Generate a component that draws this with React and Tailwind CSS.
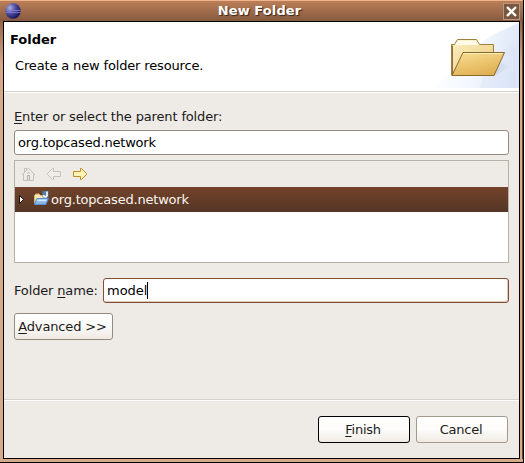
import React from "react";

function EclipseIcon() {
  return (
    <svg width="16" height="16" viewBox="0 0 16 16">
      <defs>
        <radialGradient id="globe" cx="0.3" cy="0.3" r="0.75">
          <stop offset="0" stopColor="#b0b0e2" />
          <stop offset="0.45" stopColor="#5553a8" />
          <stop offset="1" stopColor="#17125a" />
        </radialGradient>
      </defs>
      <circle cx="8" cy="8" r="7.7" fill="url(#globe)" />
      <path d="M1 7.5h14.5M0.5 9.5h15" stroke="#8385cc" strokeWidth="0.8" />
    </svg>
  );
}

function FolderBanner() {
  return (
    <svg width="85" height="66" viewBox="0 0 85 66" className="block">
      <defs>
        <linearGradient id="sky" x1="0" y1="0.3" x2="1" y2="0.5">
          <stop offset="0" stopColor="#ffffff" />
          <stop offset="0.5" stopColor="#f4f8fe" />
          <stop offset="1" stopColor="#dde6f7" />
        </linearGradient>
        <linearGradient id="back" x1="0" y1="0" x2="1" y2="1">
          <stop offset="0" stopColor="#fbf0c4" />
          <stop offset="1" stopColor="#ebc97a" />
        </linearGradient>
        <linearGradient id="front" x1="0" y1="0" x2="0.5" y2="1">
          <stop offset="0" stopColor="#f9e19a" />
          <stop offset="0.5" stopColor="#edc873" />
          <stop offset="1" stopColor="#e1b155" />
        </linearGradient>
        <linearGradient id="shade" x1="0" y1="0" x2="1" y2="0">
          <stop offset="0" stopColor="#9fadc8" />
          <stop offset="1" stopColor="#dbe4f4" />
        </linearGradient>
      </defs>
      <path d="M85 1C66 9 45 18 33 35C22 46 10 53 0 66H85Z" fill="url(#sky)" />
      <path d="M85 21C68 27 54 36 46 66H85Z" fill="#d6e1f5" opacity="0.3" />
      <path d="M17 53.5L61 54L76 44L68 41Z" fill="url(#shade)" opacity="0.8" />
      <path d="M17.5 53V22.5H20.5L23.5 17.5H42.5L45.5 22.5H59.5V53Z" fill="url(#back)" stroke="#a0803f" />
      <path d="M21 23L24 18.5H42L45 23Z" fill="#fffbe8" />
      <path d="M18.5 52V23.5" stroke="#8d713e" strokeWidth="1" />
      <path d="M29 30.5H70.5L60 53.5H18Z" fill="url(#front)" stroke="#8a6a2a" />
      <path d="M30 31.5H68.5" stroke="#fdeeb8" />
    </svg>
  );
}

function HomeIcon() {
  return (
    <svg width="16" height="16" viewBox="0 0 16 16" fill="none" stroke="#c3bfba">
      <path d="M4.5 6V2.5H6.5V4" />
      <path d="M2 9L8.5 2.2L15 9" />
      <path d="M3.5 8.5V14.5H13.5V8.5" />
      <path d="M7.5 14V9.5H9.5V14" stroke="#b3aea8" />
      <path d="M7 7H10" />
    </svg>
  );
}

function ArrowIcon({ fill, stroke, back }) {
  return (
    <svg width="16" height="16" viewBox="0 0 16 16" className={back ? "-scale-x-100" : ""}>
      <path d="M1.5 5.5H8.5V2.5H9.5L14.5 7.5V8.5L9.5 13.5H8.5V10.5H1.5Z" fill={fill} stroke={stroke} strokeLinejoin="round" />
    </svg>
  );
}

function ProjectIcon() {
  return (
    <svg width="16" height="16" viewBox="0 0 16 16">
      <path d="M1.5 12V4.5L3 3H6L7.5 4.5H13V9" fill="#f8e7b0" stroke="#d9b474" />
      <path d="M3.8 7.5H15.5L12.8 13.5H1.5Z" fill="#83b5ec" stroke="#5c8fd0" />
      <path d="M4.6 8.5H13.8L13 10.2H4Z" fill="#d7eafc" />
      <path d="M9.5 0H15.5V6.5H9.5Z" fill="#547fa9" />
      <path d="M14 0.5V4Q14 5.8 12.3 5.8Q10.7 5.8 10.5 4" fill="none" stroke="#fff" strokeWidth="1.6" />
    </svg>
  );
}

function Key({ children }) {
  return <span className="underline decoration-1 underline-offset-2">{children}</span>;
}

function Button({ border, children }) {
  return (
    <button className={`h-[27px] w-[92px] rounded-[3px] border bg-linear-to-b from-white via-[#fdfcfa] to-[#f0ebe4] pr-[2px] tracking-[-0.25px] ${border}`}>
      {children}
    </button>
  );
}

export default function App() {
  return (
    <div className="flex h-[463px] w-[525px] bg-white font-['DejaVu_Sans',sans-serif] text-[13px] leading-[16px] tracking-[-0.15px] text-[#1a1a1a]">
      <div className="flex h-[463px] w-[524px] flex-col border-r border-b border-black bg-[#d6a98b]">
        <div className="flex h-[21px] shrink-0 items-center border-t border-[#efb48c] bg-linear-to-b from-[#bc7f58] to-[#855a40] pr-[3px] pl-[5px]">
          <EclipseIcon />
          <div className="flex-1 pr-[5px] text-center font-bold tracking-[0.1px] text-white [text-shadow:1px_1px_1px_#382216]">New Folder</div>
          <div className="flex h-[17px] w-[17px] items-center justify-center border border-[#b99880] bg-[#795640]">
            <svg width="11" height="11" viewBox="0 0 11 11">
              <path d="M1 1L10 10M10 1L1 10" stroke="#fff" strokeWidth="2.3" />
            </svg>
          </div>
        </div>
        <div className="flex min-h-0 flex-1 bg-linear-to-b from-[#94644a] via-[#d6a98b] via-10% to-[#d6a98b] pb-[3px] pl-[3px]">
          <main className="flex w-[517px] shrink-0 flex-col border border-black bg-[#eeeae6]">
            <header className="flex h-[69px] shrink-0 justify-between bg-white">
              <div className="pt-[10px] pl-[6px] text-black">
                <h1 className="font-bold tracking-[0px]">Folder</h1>
                <p className="mt-[10px] pl-[5px]">Create a new folder resource.</p>
              </div>
              <FolderBanner />
            </header>
            <div className="h-[2px] shrink-0 border-t border-b border-t-[#d3cfc9] border-b-white" />
            <section className="flex flex-col px-[10px] pt-[16px]">
              <label><Key>E</Key>nter or select the parent folder:</label>
              <div className="mt-[5px] h-[25px] rounded-[3px] border border-[#958a80] bg-white pt-[4px] pl-[3px] tracking-[-0.2px] text-black">org.topcased.network</div>
              <div className="mt-[5px] h-[103px] border border-[#b8b1a9] bg-white">
                <div className="flex h-[26px] items-center gap-[10px] bg-[#eeeae6] pl-[5px]">
                  <HomeIcon />
                  <ArrowIcon back fill="#f0ece8" stroke="#c4c0bb" />
                  <ArrowIcon fill="#fff3b8" stroke="#c08a1c" />
                </div>
                <div className="flex h-[25px] items-center bg-linear-to-b from-[#734429] to-[#543526] pl-[4px] text-[#fbf6f1]">
                  <svg width="6" height="9" viewBox="0 0 6 9">
                    <path d="M0.5 0.5L4.5 4.5L0.5 8.5Z" fill="#fff" stroke="#170b05" />
                  </svg>
                  <div className="-mt-[2px] ml-[8px]"><ProjectIcon /></div>
                  <span className="ml-[2px] tracking-[-0.2px]">org.topcased.network</span>
                </div>
              </div>
              <div className="mt-[15px] flex items-center">
                <label className="w-[89px] whitespace-nowrap">Folder <Key>n</Key>ame:</label>
                <div className="flex h-[25px] flex-1 items-center rounded-[3px] border border-[#854f36] bg-white pl-[3px] tracking-[0px] text-black shadow-[inset_-1px_-1px_0_#d9c8bd]">
                  model<span className="h-[17px] w-px bg-black" />
                </div>
              </div>
              <button className="mt-[10px] h-[27px] w-[99px] rounded-[3px] border border-[#958a80] bg-linear-to-b from-white via-[#fbf9f7] to-[#efe9e3] pr-[2px] tracking-[-0.15px] whitespace-nowrap">
                <Key>A</Key>dvanced &gt;&gt;
              </button>
            </section>
            <footer className="mt-auto h-[59px] border-t border-[#d3cfc9]">
              <div className="flex justify-end gap-[6px] border-t border-white pt-[15px] pr-[11px]">
                <Button border="border-black"><Key>F</Key>inish</Button>
                <Button border="border-[#a5988c]">Cancel</Button>
              </div>
            </footer>
          </main>
          <div className="ml-[2px] w-px bg-[#684333]" />
        </div>
      </div>
    </div>
  );
}
